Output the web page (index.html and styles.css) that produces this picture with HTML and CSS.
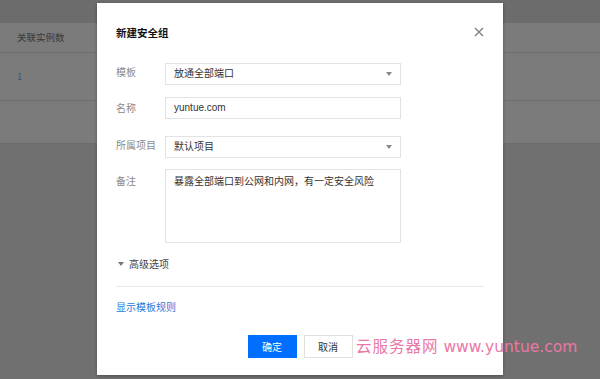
FILE: index.html
```html
<!DOCTYPE html>
<html>
<head>
    <title>新建安全组</title>
    <meta charset="utf-8">
    <link rel="stylesheet" href="styles.css">
</head>
<body>
    <div class="page">
        <div class="topbar"></div>
        <div class="table">
            <div class="thead">关联实例数</div>
            <div class="trow trow-first">1</div>
            <div class="trow trow-last"></div>
        </div>
    </div>

    <div class="modal">
        <div class="modal-head">
            <h3>新建安全组</h3>
            <span class="close">
                <svg width="10" height="10" viewBox="0 0 10 10"><path d="M1 1L9 9M9 1L1 9" stroke="#808080" stroke-width="1.4"/></svg>
            </span>
        </div>

        <div class="form">
            <div class="row">
                <label>模板</label>
                <div class="field select">放通全部端口<span class="caret"></span></div>
            </div>
            <div class="row row-name">
                <label>名称</label>
                <div class="field">yuntue.com</div>
            </div>
            <div class="row row-project">
                <label>所属项目</label>
                <div class="field select">默认项目<span class="caret"></span></div>
            </div>
            <div class="row row-note">
                <label>备注</label>
                <div class="field textarea">暴露全部端口到公网和内网，有一定安全风险</div>
            </div>
        </div>

        <div class="advanced"><span class="tri"></span>高级选项</div>
        <div class="divider"></div>
        <a class="rules" href="#">显示模板规则</a>

        <div class="footer">
            <button class="btn btn-primary">确定</button>
            <button class="btn">取消</button>
        </div>
    </div>

    <div class="watermark"><span class="wm-cn">云服务器网</span> www.yuntue.com</div>
</body>
</html>
```

FILE: styles.css
```css
body {
    margin: 0;
    background-color: #707070;
    font-family: "Noto Sans CJK SC", "Liberation Sans", sans-serif;
    font-size: 10px;
    overflow: hidden;
}
.page {
    height: 379px;
}
.topbar {
    height: 23px;
    background-color: #6c6c6c;
}
.table {
    background-color: #7b7b7b;
}
.thead {
    height: 29px;
    line-height: 29px;
    padding-left: 17px;
    color: #3a3a3a;
    font-size: 9.5px;
    border-bottom: 1px solid #6c6c6c;
}
.trow {
    padding-left: 17px;
    color: #3c5482;
    font-size: 9.5px;
    border-bottom: 1px solid #6c6c6c;
}
.trow-first {
    height: 47px;
    line-height: 47px;
}
.trow-last {
    height: 42px;
}
.modal {
    position: absolute;
    left: 97px;
    top: 3px;
    width: 368px;
    height: 372px;
    padding: 0 19px;
    background-color: #fff;
    box-shadow: 0 1px 3px rgba(0, 0, 0, 0.3);
}
.modal-head {
    display: flex;
    justify-content: space-between;
    align-items: center;
    height: 20px;
    margin-top: 19px;
}
.modal-head h3 {
    margin: 0;
    font-size: 10.5px;
    font-weight: bold;
    color: #111;
}
.close {
    display: flex;
}
.form {
    display: flex;
    flex-direction: column;
    margin-top: 21px;
}
.row {
    display: flex;
    align-items: flex-start;
}
.row label {
    width: 49px;
    flex-shrink: 0;
    line-height: 16px;
    padding-top: 1px;
    color: #8a8a8a;
    font-size: 10px;
}
.row-name {
    margin-top: 12px;
}
.row-name label {
    padding-top: 3px;
}
.row-project {
    margin-top: 17px;
}
.row-note {
    margin-top: 11px;
}
.row-note label {
    padding-top: 4px;
}
.field {
    position: relative;
    width: 226px;
    height: 20px;
    line-height: 20px;
    padding: 0 0 0 8px;
    border: 1px solid #e2e2e2;
    color: #333;
    font-family: "Liberation Sans", "Noto Sans CJK SC", sans-serif;
    font-size: 10px;
}
.textarea {
    height: 68px;
    padding-top: 4px;
    line-height: 16px;
}
.caret {
    position: absolute;
    right: 8px;
    top: 8px;
    border-left: 3px solid transparent;
    border-right: 3px solid transparent;
    border-top: 4px solid #888;
}
.advanced {
    display: flex;
    align-items: center;
    margin-top: 13px;
    margin-left: 2px;
    color: #444;
    font-size: 10px;
    line-height: 16px;
}
.tri {
    width: 0;
    height: 0;
    margin-right: 5px;
    border-left: 3px solid transparent;
    border-right: 3px solid transparent;
    border-top: 4px solid #777;
}
.divider {
    height: 1px;
    margin-top: 14px;
    background-color: #e8e8e8;
}
.rules {
    display: block;
    margin-top: 12px;
    color: #2a7ad8;
    font-size: 10px;
    line-height: 16px;
    text-decoration: none;
}
.footer {
    display: flex;
    justify-content: center;
    gap: 7px;
    margin-top: 20px;
}
.btn {
    width: 49px;
    height: 23px;
    padding: 0;
    border: 1px solid #e0e0e0;
    background-color: #fff;
    color: #333;
    font-family: "Noto Sans CJK SC", sans-serif;
    font-size: 10px;
}
.btn-primary {
    border-color: #006eff;
    background-color: #006eff;
    color: #fff;
}
.watermark {
    position: absolute;
    left: 356px;
    top: 335px;
    color: #ea78a6;
    font-family: "DejaVu Sans", sans-serif;
    font-size: 15.5px;
    line-height: 20px;
    white-space: nowrap;
}
.wm-cn {
    font-family: "Noto Sans CJK SC", serif;
    letter-spacing: 1px;
}
```
